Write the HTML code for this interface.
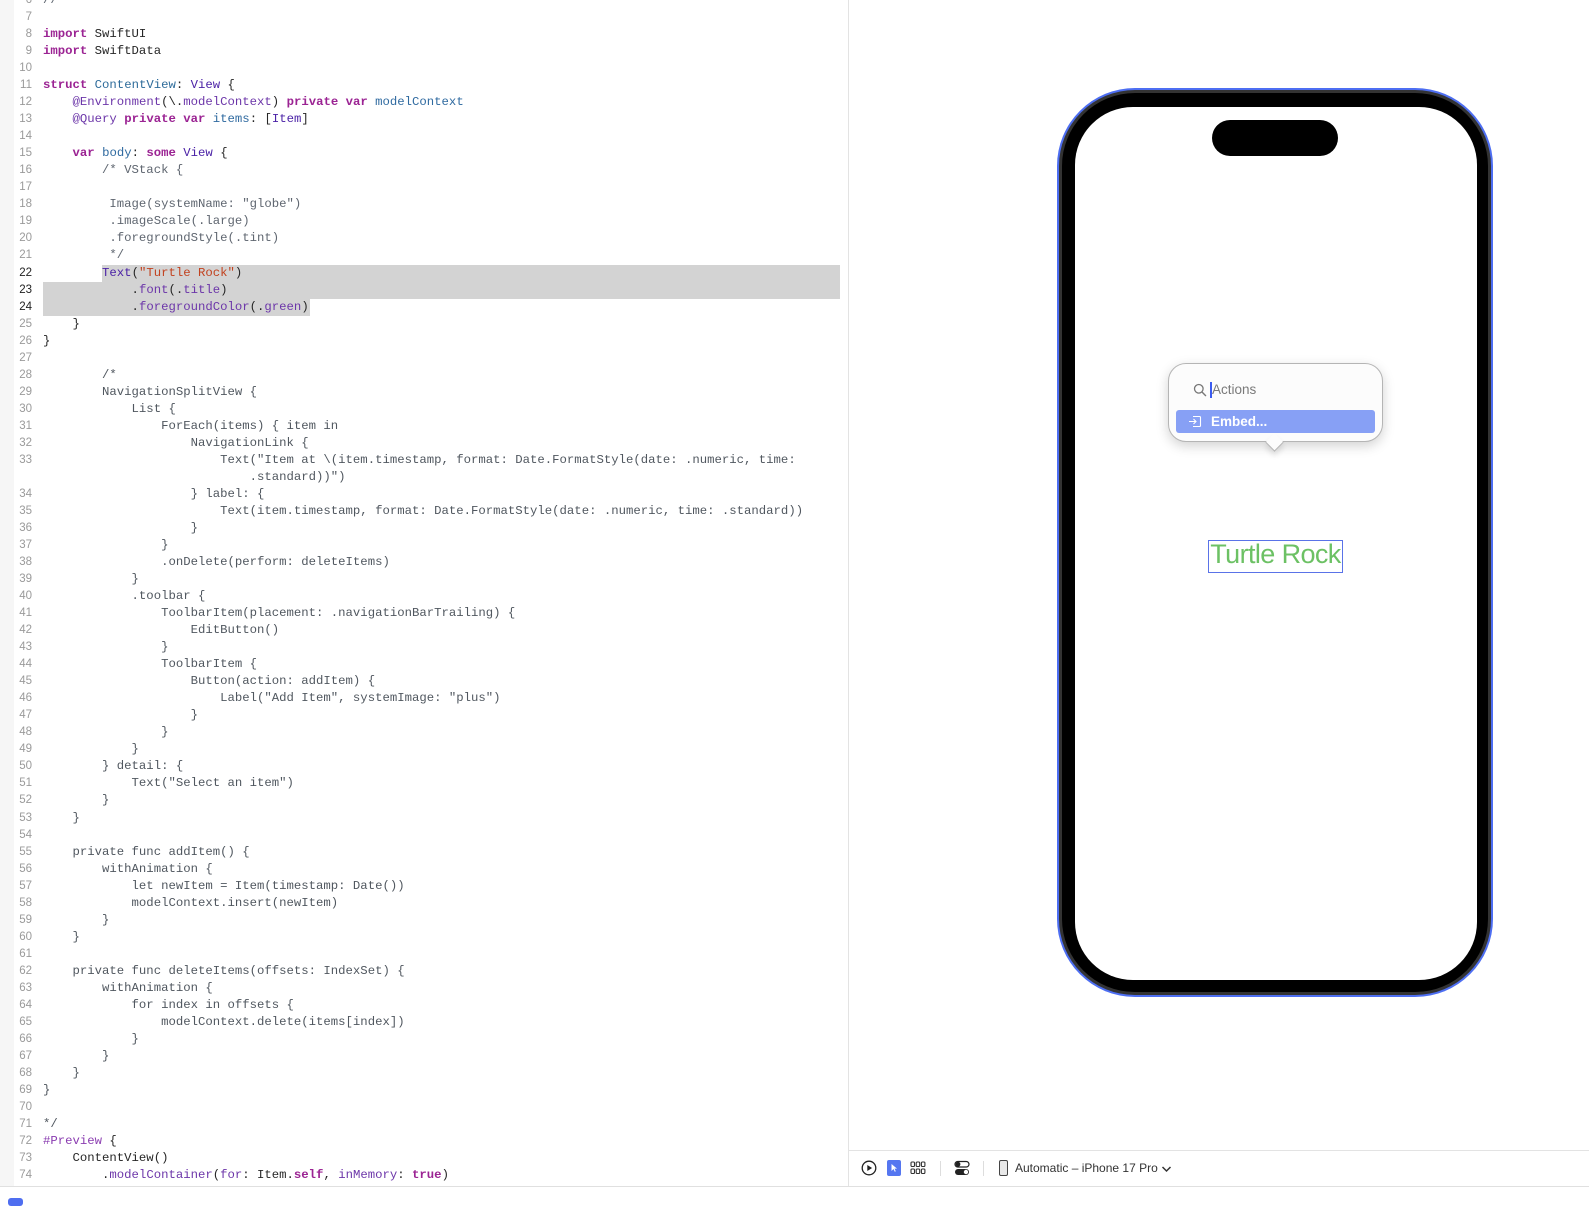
<!DOCTYPE html>
<html><head><meta charset="utf-8"><style>
*{margin:0;padding:0;box-sizing:border-box}
body{width:1589px;height:1203px;background:#fff;position:relative;overflow:hidden;font-family:"Liberation Sans",sans-serif}
#code{position:absolute;left:0;top:0;width:848px;height:1186px;overflow:hidden}
pre{position:absolute;top:-8px;margin:0;font-size:12.3px;line-height:17.03px;white-space:pre}
#nums{left:0;width:32px;text-align:right;font-family:"Liberation Sans",sans-serif;font-size:11.5px;color:#9a9a9a}
#src{left:43px;font-family:"Liberation Mono",monospace;color:#262626}
.b{color:#222}
.k{color:#9b2393;font-weight:bold}
.ty{color:#4b22a6}
.d{color:#2d6b9a}
.p{color:#2f6aa0}
.m{color:#6c36a9}
.s{color:#c2421f}
.c{color:#5f6670}
.g{color:#50575f}
.hl{position:absolute;background:#d3d3d3}
</style></head><body>
<div id="code">
<div style="position:absolute;left:0;top:0;width:14px;height:1186px;background:#f6f6f6"></div>
<div class="hl" style="left:102px;top:264.5px;width:738px;height:17px"></div>
<div class="hl" style="left:43px;top:281.5px;width:797px;height:17px"></div>
<div class="hl" style="left:43px;top:298.5px;width:267px;height:17px"></div>
<pre id="nums">6
7
8
9
10
11
12
13
14
15
16
17
18
19
20
21
<span class="b">22</span>
<span class="b">23</span>
<span class="b">24</span>
25
26
27
28
29
30
31
32
33

34
35
36
37
38
39
40
41
42
43
44
45
46
47
48
49
50
51
52
53
54
55
56
57
58
59
60
61
62
63
64
65
66
67
68
69
70
71
72
73
74
75</pre>
<pre id="src"><span class="c">//</span>
 
<span class="k">import</span> SwiftUI
<span class="k">import</span> SwiftData
 
<span class="k">struct</span> <span class="d">ContentView</span>: <span class="ty">View</span> {
    <span class="m">@Environment</span>(\.<span class="m">modelContext</span>) <span class="k">private</span> <span class="k">var</span> <span class="p">modelContext</span>
    <span class="m">@Query</span> <span class="k">private</span> <span class="k">var</span> <span class="p">items</span>: [<span class="ty">Item</span>]
 
    <span class="k">var</span> <span class="p">body</span>: <span class="k">some</span> <span class="ty">View</span> {
<span class="c">        /* VStack {</span>
 
<span class="c">         Image(systemName: "globe")</span>
<span class="c">         .imageScale(.large)</span>
<span class="c">         .foregroundStyle(.tint)</span>
<span class="c">         */</span>
        <span class="ty">Text</span>(<span class="s">"Turtle Rock"</span>)
            .<span class="m">font</span>(.<span class="m">title</span>)
            .<span class="m">foregroundColor</span>(.<span class="m">green</span>)
    }
}
 
<span class="g">        /*
        NavigationSplitView {
            List {
                ForEach(items) { item in
                    NavigationLink {
                        Text("Item at \(item.timestamp, format: Date.FormatStyle(date: .numeric, time:
                            .standard))")
                    } label: {
                        Text(item.timestamp, format: Date.FormatStyle(date: .numeric, time: .standard))
                    }
                }
                .onDelete(perform: deleteItems)
            }
            .toolbar {
                ToolbarItem(placement: .navigationBarTrailing) {
                    EditButton()
                }
                ToolbarItem {
                    Button(action: addItem) {
                        Label("Add Item", systemImage: "plus")
                    }
                }
            }
        } detail: {
            Text("Select an item")
        }
    }
 
    private func addItem() {
        withAnimation {
            let newItem = Item(timestamp: Date())
            modelContext.insert(newItem)
        }
    }
 
    private func deleteItems(offsets: IndexSet) {
        withAnimation {
            for index in offsets {
                modelContext.delete(items[index])
            }
        }
    }
}
 
*/</span>
<span style="color:#8a3cb0">#Preview</span> {
    ContentView()
        .<span class="m">modelContainer</span>(<span class="m">for</span>: Item.<span class="k">self</span>, <span class="m">inMemory</span>: <span class="k">true</span>)
}</pre>
</div>
<div style="position:absolute;left:848px;top:0;width:1px;height:1186px;background:#e3e3e3"></div>
<div style="position:absolute;left:849px;top:1150px;width:740px;height:1px;background:#e3e3e3"></div>
<div style="position:absolute;left:0;top:1186px;width:1589px;height:1px;background:#e0e0e0"></div>
<div style="position:absolute;left:8px;top:1198px;width:15px;height:8px;border-radius:3px;background:#4f6ef0"></div>

<!-- phone -->
<div style="position:absolute;left:1057px;top:88px;width:436px;height:909px;border-radius:78px;background:#4d6ef2"></div>
<div style="position:absolute;left:1059px;top:90px;width:432px;height:905px;border-radius:76px;background:#333"></div>
<div style="position:absolute;left:1062px;top:93px;width:426px;height:899px;border-radius:73px;background:#000"></div>
<div style="position:absolute;left:1075px;top:107px;width:402px;height:873px;border-radius:58px;background:#fff"></div>
<div style="position:absolute;left:1212px;top:120px;width:126px;height:36px;border-radius:18px;background:#000"></div>

<!-- popup -->
<div style="position:absolute;left:1168px;top:363px;width:215px;height:79px;border-radius:18px;background:#fcfcfc;border:1px solid #b5b5b5;box-shadow:0 4px 12px rgba(0,0,0,.18)"></div>
<div style="position:absolute;left:1268px;top:436px;width:13px;height:13px;background:#fcfcfc;transform:rotate(45deg);border-right:1px solid #b5b5b5;border-bottom:1px solid #b5b5b5;box-shadow:3px 3px 6px rgba(0,0,0,.12)"></div>
<svg style="position:absolute;left:1193px;top:383px" width="14" height="14" viewBox="0 0 14 14"><circle cx="5.8" cy="5.8" r="4.3" fill="none" stroke="#777" stroke-width="1.3"/><line x1="9" y1="9" x2="12.6" y2="12.6" stroke="#777" stroke-width="1.4" stroke-linecap="round"/></svg>
<div style="position:absolute;left:1209.5px;top:382px;width:2px;height:16px;background:#3b5bf0"></div>
<div style="position:absolute;left:1212px;top:382px;font-size:13.5px;color:#7a7a7a">Actions</div>
<div style="position:absolute;left:1176px;top:410px;width:199px;height:23px;border-radius:3px;background:#87a0f5"></div>
<svg style="position:absolute;left:1188px;top:415px" width="14" height="13" viewBox="0 0 14 13"><path d="M5 1.5h6.5a1 1 0 0 1 1 1v8a1 1 0 0 1-1 1H5" fill="none" stroke="#fff" stroke-width="1.1"/><path d="M1 6.5h7M5.5 4l2.5 2.5-2.5 2.5" fill="none" stroke="#fff" stroke-width="1.1"/></svg>
<div style="position:absolute;left:1211px;top:414px;font-size:13.5px;color:#fff;font-weight:bold">Embed...</div>

<!-- turtle rock -->
<div style="position:absolute;left:1208px;top:540px;width:135px;height:33px;border:1px solid #5a73e8"></div>
<div style="position:absolute;left:1196px;top:539px;width:159px;text-align:center;font-size:27px;color:#6cc164;white-space:nowrap;letter-spacing:-0.6px">Turtle Rock</div>

<!-- toolbar -->
<svg style="position:absolute;left:861px;top:1160px" width="16" height="16" viewBox="0 0 16 16"><circle cx="8" cy="8" r="6.8" fill="none" stroke="#222" stroke-width="1.3"/><path d="M6.3 5v6l4.8-3z" fill="#222"/></svg>
<div style="position:absolute;left:887px;top:1160px;width:14px;height:16px;border-radius:2px;background:#5576f0"></div>
<svg style="position:absolute;left:890px;top:1163px" width="8" height="10" viewBox="0 0 8 10"><path d="M1.5 1v7l2-2 1.3 2.8 1-.5L4.5 5.6H7z" fill="#fff"/></svg>
<svg style="position:absolute;left:910px;top:1161px" width="16" height="14" viewBox="0 0 16 14"><g fill="none" stroke="#333" stroke-width="1.1"><rect x="1" y="1" width="3.5" height="4.5" rx="1"/><rect x="6.2" y="1" width="3.5" height="4.5" rx="1"/><rect x="11.4" y="1" width="3.5" height="4.5" rx="1"/><rect x="1" y="8" width="3.5" height="4.5" rx="1"/><rect x="6.2" y="8" width="3.5" height="4.5" rx="1"/><rect x="11.4" y="8" width="3.5" height="4.5" rx="1"/></g></svg>
<div style="position:absolute;left:940px;top:1161px;width:1px;height:15px;background:#ddd"></div>
<svg style="position:absolute;left:954px;top:1160px" width="16" height="16" viewBox="0 0 16 16"><rect x="1" y="1.5" width="14" height="5.5" rx="2.75" fill="none" stroke="#222" stroke-width="1.2"/><circle cx="4" cy="4.25" r="2.4" fill="#222"/><rect x="1" y="9" width="14" height="6" rx="3" fill="#222"/><circle cx="12" cy="12" r="2.2" fill="#fff"/></svg>
<div style="position:absolute;left:983px;top:1161px;width:1px;height:15px;background:#ddd"></div>
<div style="position:absolute;left:999px;top:1160px;width:9px;height:16px;border:1.2px solid #444;border-radius:2px;background:#e8e8e8"></div>
<div style="position:absolute;left:1015px;top:1161px;font-size:12px;color:#333;white-space:nowrap">Automatic – iPhone 17 Pro</div>
<svg style="position:absolute;left:1161px;top:1165px" width="11" height="8" viewBox="0 0 11 8"><path d="M1.5 2l4 4 4-4" fill="none" stroke="#333" stroke-width="1.5"/></svg>
</body></html>
